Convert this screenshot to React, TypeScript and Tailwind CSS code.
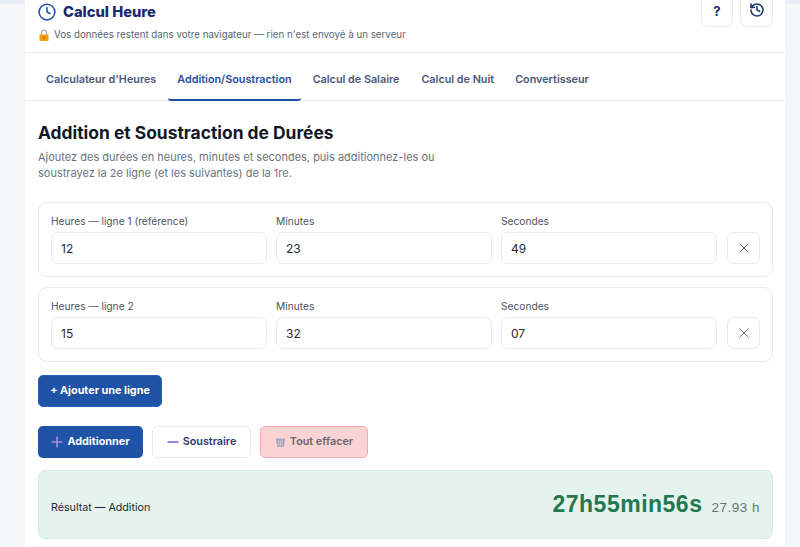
import React from "react";

const font = { fontFamily: '"Inter", "Noto Sans", sans-serif' };

function Field({ label, value }: { label: string; value: string }) {
  return (
    <div className="flex flex-col flex-1 min-w-0">
      <label className="text-[10.2px] leading-[12px] h-[12px] mb-[5px] text-[#4b5563] whitespace-nowrap">{label}</label>
      <input
        readOnly
        value={value}
        className="h-[32px] w-full rounded-[7px] border border-[#e8eaee] bg-white px-[9px] text-[12px] text-[#1f2937] outline-none"
      />
    </div>
  );
}

function Row({ first, values }: { first: string; values: string[] }) {
  return (
    <div className="rounded-[9px] border border-[#e8eaee] pt-[12px] pb-[12px] pl-[12px] pr-[12px] flex items-end gap-[9px]">
      <Field label={first} value={values[0]} />
      <Field label="Minutes" value={values[1]} />
      <Field label="Secondes" value={values[2]} />
      <button className="ml-[1px] w-[33px] h-[32px] shrink-0 rounded-[7px] border border-[#e8eaee] flex items-center justify-center">
        <svg width="12" height="12" viewBox="0 0 12 12" fill="none" stroke="#6b7280" strokeWidth="1">
          <path d="M1.5 1.5l9 9M10.5 1.5l-9 9" />
        </svg>
      </button>
    </div>
  );
}

export default function App() {
  return (
    <div className="h-[547px] overflow-hidden bg-[#f4f6f9] relative" style={font}>
      <div className="absolute inset-x-0 top-0 h-[4px] bg-[#e9edf8]" />
      <div className="relative ml-[25px] mr-[15px] bg-white h-[547px] overflow-hidden">
        {/* header */}
        <div className="h-[53px] border-b border-[#e8eaee] pl-[13px] pr-[12px] flex justify-between">
          <div>
            <div className="flex items-center gap-[7px] pt-[1px] h-[22px]">
              <svg width="18" height="18" viewBox="0 0 24 24" fill="none" stroke="#1e4fa3" strokeWidth="2" strokeLinecap="round" strokeLinejoin="round">
                <circle cx="12" cy="12" r="10.5" />
                <path d="M12 6v6l4 2" />
              </svg>
              <h1 className="text-[14.7px] font-extrabold leading-[20px] text-[#1a2b6b]">Calcul Heure</h1>
            </div>
            <div className="flex items-center gap-[4px] mt-[6px] text-[9.75px] leading-[14px] text-[#5b6472]">
              <svg width="12" height="12" viewBox="0 0 12 12">
                <path d="M3.5 6V3.5a2.5 2.5 0 015 0V6" fill="none" stroke="#a8a29e" strokeWidth="1.2" />
                <rect x="1.5" y="5.5" width="9" height="6.5" rx="1" fill="#f59e0b" />
                <rect x="5.4" y="7.5" width="1.2" height="2.5" fill="#b45309" />
              </svg>
              <span>Vos données restent dans votre navigateur — rien n'est envoyé à un serveur</span>
            </div>
          </div>
          <div className="flex gap-[7px] -mt-[6px] h-[33px]">
            <button className="w-[32px] h-[33px] rounded-[7px] border border-[#e8eaee] flex items-center justify-center pt-[3px] text-[13px] font-bold text-[#1a2b6b]">?</button>
            <button className="w-[33px] h-[33px] rounded-[7px] border border-[#e8eaee] flex items-start pt-[7px] justify-center">
              <svg width="16" height="16" viewBox="0 0 24 24" fill="none" stroke="#1e3a6e" strokeWidth="2.4" strokeLinecap="round" strokeLinejoin="round">
                <path d="M3 12a9 9 0 1 0 9-9 9.75 9.75 0 0 0-6.74 2.74L3 8" />
                <path d="M3 3v5h5" />
                <path d="M12 7v5l4 2" />
              </svg>
            </button>
          </div>
        </div>
        {/* tabs */}
        <div className="h-[48px] border-b border-[#e8eaee] pl-[13px] flex text-[10.8px] font-semibold text-[#4b5878]">
          <div className="px-[8px] pt-[8px] flex items-center">Calculateur d'Heures</div>
          <div className="px-[9px] pt-[8px] flex items-center ml-[4px] text-[#1e4fa3] border-b-2 border-[#1e4fa3] rounded-b-[3px] h-[48px]">Addition/Soustraction</div>
          <div className="px-[9px] pt-[8px] flex items-center ml-[3px]">Calcul de Salaire</div>
          <div className="px-[9px] pt-[8px] flex items-center ml-[4px]">Calcul de Nuit</div>
          <div className="px-[9px] pt-[8px] flex items-center ml-[3px]">Convertisseur</div>
        </div>
        {/* body */}
        <div className="px-[13px] pr-[12px]">
          <h2 className="mt-[21px] text-[17.4px] leading-[22px] font-bold text-[#111827]">Addition et Soustraction de Durées</h2>
          <p className="mt-[5px] w-[410px] text-[11px] leading-[16px] text-[#6b7280]">
            Ajoutez des durées en heures, minutes et secondes, puis additionnez-les ou soustrayez la 2e ligne (et les suivantes) de la 1re.
          </p>
          <div className="mt-[21px] flex flex-col gap-[10px]">
            <Row first="Heures — ligne 1 (référence)" values={["12", "23", "49"]} />
            <Row first="Heures — ligne 2" values={["15", "32", "07"]} />
          </div>
          <button className="mt-[13px] block w-[124px] h-[32px] rounded-[5px] bg-[#1e53a5] border border-[#2a62bb] text-white text-[10.8px] font-bold">+ Ajouter une ligne</button>
          <div className="mt-[19px] flex gap-[9px]">
            <button className="w-[105px] h-[32px] rounded-[5px] bg-[#1e53a5] text-white text-[10.8px] font-bold flex items-center justify-center gap-[4px]">
              <svg width="12" height="12" viewBox="0 0 12 12" stroke="#a78bdb" strokeWidth="1.6"><path d="M6 0.5v11M0.5 6h11" /></svg>
              Additionner
            </button>
            <button className="w-[99px] h-[32px] rounded-[5px] bg-white border border-[#e8eaee] text-[#2a3a70] text-[10.8px] font-semibold flex items-center justify-center gap-[4px]">
              <svg width="12" height="12" viewBox="0 0 12 12" stroke="#6d4fd0" strokeWidth="1.4"><path d="M0.5 6h11" /></svg>
              Soustraire
            </button>
            <button className="w-[108px] h-[32px] rounded-[5px] bg-[#fad4d4] border border-[#f3a9ad] text-[#6b6570] text-[10.8px] font-semibold flex items-center justify-center gap-[4px]">
              <svg width="11" height="11" viewBox="0 0 12 12">
                <path d="M1 1.5h10L9.6 11H2.4z" fill="#a9a5b5" />
                <path d="M4 3.5l.4 6M6 3.5v6M8 3.5l-.4 6" stroke="#d8d6de" strokeWidth="0.7" />
              </svg>
              Tout effacer
            </button>
          </div>
          <div className="mt-[12px] h-[69px] rounded-[7px] bg-[#e4f3ed] border border-[#d5ebe1] pl-[12px] pr-[12px] flex items-center justify-between">
            <span className="text-[10.7px] text-[#1f2937] mt-[8px]">Résultat — Addition</span>
            <div className="flex items-baseline gap-[9px] -mt-[1px]">
              <span className="text-[23px] font-bold text-[#23784f] tracking-[0.5px]" style={{ fontFamily: '"Liberation Sans", Arial, sans-serif' }}>27h55min56s</span>
              <span className="text-[13.5px] text-[#6b7280] tracking-[0.5px]" style={{ fontFamily: '"Liberation Sans", Arial, sans-serif' }}>27.93 h</span>
            </div>
          </div>
        </div>
      </div>
    </div>
  );
}
